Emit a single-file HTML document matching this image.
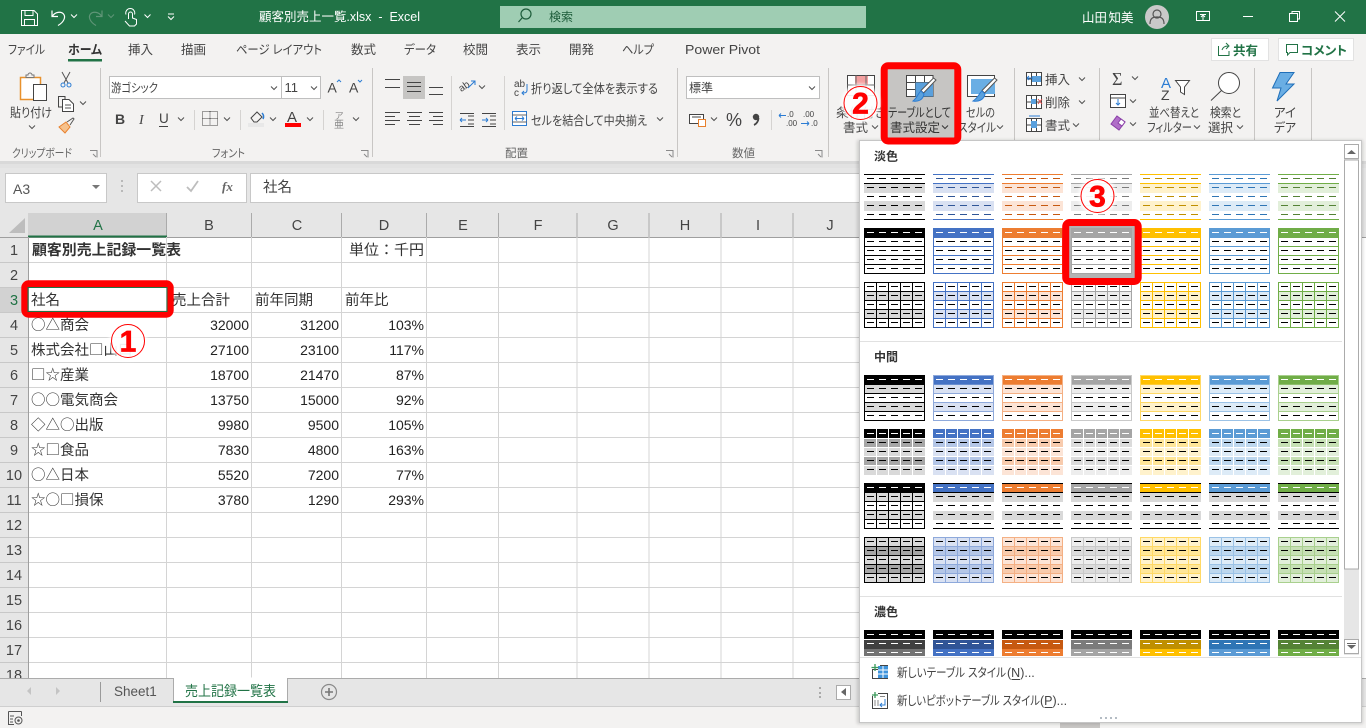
<!DOCTYPE html>
<html lang="ja"><head><meta charset="utf-8"><title>顧客別売上一覧.xlsx - Excel</title>
<style>
html,body{margin:0;padding:0;width:1366px;height:728px;overflow:hidden;background:#e6e6e6}
svg{display:block;position:absolute;left:0;top:0}
text{font-family:"Liberation Sans","Noto Sans CJK JP",sans-serif;font-feature-settings:"palt";white-space:pre;fill:#444;font-size:12.5px}
.w{fill:#fff}
.cell{font-family:"Noto Sans CJK JP","Liberation Sans",sans-serif;font-size:14.5px;fill:#333;font-feature-settings:normal}
.num{font-size:14px;fill:#222;text-anchor:end}
.h{font-size:14.5px;fill:#444;text-anchor:middle}
.b{font-weight:bold}
.g{fill:#217346}
.head{font-size:12px;font-weight:bold;fill:#333}
.dg{fill:#666;font-size:11.5px}
.nd{font-family:"Liberation Sans",sans-serif;font-weight:bold;font-size:30px;fill:#f00;text-anchor:middle;stroke:#f00;stroke-width:.7}
</style></head><body>
<svg width="1366" height="728" viewBox="0 0 1366 728" xmlns="http://www.w3.org/2000/svg">
<defs>
<path id="cv" d="M-3-1.5L0 1.5 3-1.5" fill="none"/>
<g id="a">
<rect y="9" width="61" height="10" style="fill:var(--t)"/><rect y="27" width="61" height="10" style="fill:var(--t)"/>
<path d="M0 .5H61M0 9.5H61M0 45.5H61" style="stroke:var(--m)"/>
<path d="M3 4.5H58M3 13.5H58M3 22.5H58M3 31.5H58M3 40.5H58" stroke-dasharray="7 5" style="stroke:var(--d)"/>
</g>
<g id="b">
<rect x=".5" y=".5" width="60" height="45" fill="#fff" style="stroke:var(--m)"/>
<rect width="61" height="10" style="fill:var(--m)"/>
<path d="M0 18.5H61M0 27.5H61M0 36.5H61" style="stroke:var(--m)"/>
<path d="M3 4.5H58" stroke="#fff" stroke-dasharray="7 5"/>
<path d="M3 13.5H58M3 22.5H58M3 31.5H58M3 40.5H58" stroke="#000" stroke-dasharray="7 5"/>
</g>
<g id="c">
<rect y="9" width="61" height="10" style="fill:var(--t)"/><rect y="27" width="61" height="10" style="fill:var(--t)"/>
<path d="M.5 .5H60.5V45.5H.5ZM0 9.5H61M0 18.5H61M0 27.5H61M0 36.5H61M12.5 0V46M24.5 0V46M36.5 0V46M48.5 0V46" fill="none" style="stroke:var(--m)"/>
<path d="M3 4.5H58M3 13.5H58M3 22.5H58M3 31.5H58M3 40.5H58" stroke="#000" stroke-dasharray="7 5"/>
</g>
<g id="d">
<rect y="9" width="61" height="10" style="fill:var(--t)"/><rect y="27" width="61" height="10" style="fill:var(--t)"/>
<path d="M.5 .5H60.5V45.5H.5ZM0 9.5H61M0 18.5H61M0 27.5H61M0 36.5H61" fill="none" style="stroke:var(--b)"/>
<rect x="1" y="1" width="59" height="8.5" style="fill:var(--m)"/>
<path d="M3 4.5H58" stroke="#fff" stroke-dasharray="7 5"/>
<path d="M3 13.5H58M3 22.5H58M3 31.5H58M3 40.5H58" stroke="#000" stroke-dasharray="7 5"/>
</g>
<g id="e">
<rect width="61" height="46" style="fill:var(--t)"/>
<rect width="61" height="10" style="fill:var(--m)"/>
<rect y="10" width="61" height="9" style="fill:var(--u)"/><rect y="28" width="61" height="9" style="fill:var(--u)"/>
<path d="M0 9.5H61M0 18.5H61M0 27.5H61M0 36.5H61M12.5 0V46M24.5 0V46M36.5 0V46M48.5 0V46" stroke="#fff" fill="none"/>
<path d="M3 4.5H58" stroke="#fff" stroke-dasharray="7 5"/>
<path d="M3 13.5H58M3 22.5H58M3 31.5H58M3 40.5H58" stroke="#000" stroke-dasharray="7 5"/>
</g>
<g id="f">
<rect width="61" height="10" style="fill:var(--m)"/>
<rect y="10" width="61" height="9" fill="#d9d9d9"/><rect y="28" width="61" height="9" fill="#d9d9d9"/>
<path d="M0 .5H61M0 9.5H61M0 45.5H61" stroke="#000"/>
<path d="M3 4.5H58" stroke="#fff" stroke-dasharray="7 5"/>
<path d="M3 13.5H58M3 22.5H58M3 31.5H58M3 40.5H58" stroke="#000" stroke-dasharray="7 5"/>
</g>
<g id="g">
<rect y="9" width="61" height="10" fill="#d9d9d9"/><rect y="27" width="61" height="10" fill="#d9d9d9"/>
<rect width="61" height="10" fill="#000"/>
<path d="M.5 .5H60.5V45.5H.5ZM0 9.5H61M0 18.5H61M0 27.5H61M0 36.5H61M12.5 9V46M24.5 9V46M36.5 9V46M48.5 9V46" fill="none" stroke="#000"/>
<path d="M3 4.5H58" stroke="#fff" stroke-dasharray="7 5"/>
<path d="M3 13.5H58M3 22.5H58M3 31.5H58M3 40.5H58" stroke="#000" stroke-dasharray="7 5"/>
</g>
<g id="h">
<rect width="61" height="46" style="fill:var(--t)"/>
<rect y="9" width="61" height="10" style="fill:var(--u)"/><rect y="27" width="61" height="10" style="fill:var(--u)"/>
<path d="M.5 .5H60.5V45.5H.5ZM0 9.5H61M0 18.5H61M0 27.5H61M0 36.5H61M12.5 0V46M24.5 0V46M36.5 0V46M48.5 0V46" fill="none" style="stroke:var(--b)"/>
<path d="M3 4.5H58M3 13.5H58M3 22.5H58M3 31.5H58M3 40.5H58" stroke="#000" stroke-dasharray="7 5"/>
</g>
<g id="i">
<rect width="61" height="9" fill="#000"/>
<rect y="10" width="61" height="9" style="fill:var(--k)"/>
<rect y="19" width="61" height="7" style="fill:var(--m)"/>
<path d="M3 4.5H58M3 13.5H58M3 22.5H58" stroke="#fff" stroke-dasharray="7 5"/>
</g>
<filter id="bl" x="-20%" y="-20%" width="140%" height="140%"><feGaussianBlur stdDeviation="1.5"/></filter>
</defs>

<!-- background -->
<rect width="1366" height="728" fill="#e6e6e6"/>
<rect y="237" x="28" width="1338" height="441" fill="#fff"/>

<!-- formula bar -->
<g fill="#fff" stroke="#c8c8c8">
<rect x="5.5" y="173.5" width="101" height="29"/>
<rect x="137.5" y="173.5" width="109" height="29"/>
<rect x="250.5" y="173.5" width="1110" height="29"/>
</g>
<text x="13" y="194" style="font-size:14px;fill:#555">A3</text>
<path d="M92 185h8l-4 4z" fill="#777"/>
<path d="M122 180v2M122 185v2M122 190v2" stroke="#aaa" stroke-width="1.5"/>
<path d="M151 181l10 10M161 181l-10 10" stroke="#bdbdbd" stroke-width="1.5"/>
<path d="M187 187l4 4 7-10" stroke="#bdbdbd" stroke-width="1.8" fill="none"/>
<text x="222" y="191" style="font-family:'Liberation Serif',serif;font-style:italic;font-weight:bold;font-size:13px;fill:#666">fx</text>
<text x="263" y="192" style="font-size:14.5px;font-feature-settings:normal">社名</text>

<!-- column headers -->
<rect x="28" y="213" width="139" height="24" fill="#d2d2d2"/>
<path d="M25 218V233H9Z" fill="#bdbdbd"/>
<path d="M166.5 213V237M251.5 213V237M341.5 213V237M426.5 213V237M498.5 213V237M577 213V237M649 213V237M721 213V237M793 213V237" stroke="#ababab"/>
<path d="M0 237.5H1366" stroke="#9f9f9f"/>
<rect x="28" y="235.5" width="139" height="2" fill="#217346"/>
<text class="h g" x="98" y="230" style="fill:#217346">A</text>
<text class="h" x="209" y="230">B</text><text class="h" x="297" y="230">C</text><text class="h" x="384" y="230">D</text>
<text class="h" x="463" y="230">E</text><text class="h" x="538" y="230">F</text><text class="h" x="613" y="230">G</text><text class="h" x="685" y="230">H</text><text class="h" x="758" y="230">I</text><text class="h" x="830" y="230">J</text>

<!-- grid -->
<path d="M28 262.5H866M28 287.5H866M28 312.5H866M28 337.5H866M28 362.5H866M28 387.5H866M28 412.5H866M28 437.5H866M28 462.5H866M28 487.5H866M28 512.5H866M28 537.5H866M28 562.5H866M28 587.5H866M28 612.5H866M28 637.5H866M28 662.5H866M166.5 237V678M251.5 237V678M341.5 237V678M426.5 237V678M498.5 237V678M577 237V678M649 237V678M721 237V678M793 237V678" stroke="#d4d4d4"/>

<!-- row headers -->
<rect y="238" width="28" height="440" fill="#e6e6e6"/>
<rect y="288" width="28" height="24.5" fill="#d2d2d2"/>
<path d="M0 262.5H28M0 287.5H28M0 312.5H28M0 337.5H28M0 362.5H28M0 387.5H28M0 412.5H28M0 437.5H28M0 462.5H28M0 487.5H28M0 512.5H28M0 537.5H28M0 562.5H28M0 587.5H28M0 612.5H28M0 637.5H28M0 662.5H28" stroke="#c8c8c8"/>
<path d="M28.5 237V678" stroke="#9f9f9f"/>
<g>
<text class="h" x="14" y="255">1</text><text class="h" x="14" y="280">2</text><text class="h" x="14" y="305" style="fill:#217346">3</text><text class="h" x="14" y="330">4</text><text class="h" x="14" y="355">5</text><text class="h" x="14" y="380">6</text><text class="h" x="14" y="405">7</text><text class="h" x="14" y="430">8</text><text class="h" x="14" y="455">9</text><text class="h" x="14" y="480">10</text><text class="h" x="14" y="505">11</text><text class="h" x="14" y="530">12</text><text class="h" x="14" y="555">13</text><text class="h" x="14" y="580">14</text><text class="h" x="14" y="605">15</text><text class="h" x="14" y="630">16</text><text class="h" x="14" y="655">17</text><text class="h" x="14" y="680">18</text>
</g>

<!-- cells -->
<text class="cell b" x="32" y="255" textLength="149" lengthAdjust="spacingAndGlyphs">顧客別売上記録一覧表</text>
<text class="cell" x="349" y="255" textLength="75" lengthAdjust="spacingAndGlyphs">単位：千円</text>
<text class="cell" x="31" y="305">社名</text><text class="cell" x="172" y="305">売上合計</text><text class="cell" x="255" y="305">前年同期</text><text class="cell" x="345" y="305">前年比</text>
<text class="cell" x="31" y="330">○△商会</text><text class="cell" x="31" y="355">株式会社□山口</text><text class="cell" x="31" y="380">□☆産業</text><text class="cell" x="31" y="405">○○電気商会</text><text class="cell" x="31" y="430">◇△○出版</text><text class="cell" x="31" y="455">☆□食品</text><text class="cell" x="31" y="480">○△日本</text><text class="cell" x="31" y="505">☆○□損保</text>
<text class="num" x="249" y="330">32000</text><text class="num" x="339" y="330">31200</text><text class="num" x="424" y="330">103%</text>
<text class="num" x="249" y="355">27100</text><text class="num" x="339" y="355">23100</text><text class="num" x="424" y="355">117%</text>
<text class="num" x="249" y="380">18700</text><text class="num" x="339" y="380">21470</text><text class="num" x="424" y="380">87%</text>
<text class="num" x="249" y="405">13750</text><text class="num" x="339" y="405">15000</text><text class="num" x="424" y="405">92%</text>
<text class="num" x="249" y="430">9980</text><text class="num" x="339" y="430">9500</text><text class="num" x="424" y="430">105%</text>
<text class="num" x="249" y="455">7830</text><text class="num" x="339" y="455">4800</text><text class="num" x="424" y="455">163%</text>
<text class="num" x="249" y="480">5520</text><text class="num" x="339" y="480">7200</text><text class="num" x="424" y="480">77%</text>
<text class="num" x="249" y="505">3780</text><text class="num" x="339" y="505">1290</text><text class="num" x="424" y="505">293%</text>

<!-- tab bar and status -->
<rect y="678" width="1366" height="29" fill="#e6e6e6"/>
<path d="M0 678.5H1366" stroke="#ababab"/>
<rect x="173.5" y="677.5" width="114" height="25" fill="#fff"/>
<path d="M173.5 678V702M287.5 678V702" stroke="#ababab"/>
<rect x="173" y="701" width="115" height="2" fill="#217346"/>
<path d="M100.5 682V702" stroke="#9a9a9a"/>
<path d="M31 687v8l-4-4zM56 687v8l4-4z" fill="#c4c4c4"/>
<text x="114" y="696" style="font-size:13.5px;fill:#555">Sheet1</text>
<text x="185" y="696" style="font-size:14px;fill:#217346;font-feature-settings:normal" textLength="91" lengthAdjust="spacingAndGlyphs">売上記録一覧表</text>
<circle cx="329" cy="692" r="7.5" fill="none" stroke="#8a8a8a" stroke-width="1.2"/>
<path d="M329 688v8M325 692h8" stroke="#777" stroke-width="1.6"/>
<path d="M820 687v2M820 692v2M820 696v2" stroke="#aaa" stroke-width="2"/>
<rect x="836.5" y="685.5" width="14" height="14" fill="#fff" stroke="#ababab"/>
<path d="M846 688v8l-5-4z" fill="#666"/>
<rect y="706" width="1366" height="22" fill="#f3f2f1"/>
<path d="M0 706.5H1366" stroke="#cfcfcf"/>
<path d="M8.5 711.5H21.5M8.5 711.5V724.5H14M21.5 711.5V716M10 716h4M10 719h3M10 722h3" stroke="#555" fill="none"/>
<circle cx="18.5" cy="720.5" r="3.5" fill="none" stroke="#555"/><circle cx="18.5" cy="720.5" r="1.3" fill="#555"/>
<rect x="1060" y="722" width="40" height="6" fill="#c8c6c4"/>

<!-- title bar -->
<rect width="1366" height="34" fill="#217346"/>
<rect x="500" y="6" width="366" height="22" fill="#9fcdb3"/>
<g fill="none" stroke="#fff">
<path d="M21.5 10.5H34L37.5 14V25.5H21.5ZM25 10.5V15.5H33V10.5M24.5 25.5V19.5H34.5V25.5"/>
<path d="M52 10.5V16.5H58M52.5 16C55 12 61 11 63.5 14C66 17 64 22 58 25.5" stroke-width="1.2"/>
<path d="M128.5 19V14a2 2 0 0 1 4 0V18l4 1.5V24L134.5 26H129.5L125 21M126 14.5a4.5 4.5 0 1 1 8.5 0"/>
<use href="#cv" x="74" y="16"/><use href="#cv" x="147.5" y="16"/>
<path d="M168 14h6"/><use href="#cv" x="171" y="18"/>
<rect x="1196.5" y="11.5" width="13" height="9"/><path d="M1200 14.5h6M1203 20v-4M1201 17l2-2 2 2"/>
<path d="M1243 16.5h10"/>
<rect x="1289.5" y="13.5" width="8" height="8"/><path d="M1292 13V11.5H1299.5V19H1298"/>
<path d="M1335 11.5l10 10M1345 11.5l-10 10"/>
</g>
<g fill="none" stroke="#5f9577"><path d="M102 10.5V16.5H96M101.5 16C99 12 93 11 90.5 14C88 17 90 22 96 25.5" stroke-width="1.2"/><use href="#cv" x="111" y="16"/></g>
<text class="w" x="259" y="21" style="font-size:12.5px;font-feature-settings:normal" textLength="161" lengthAdjust="spacingAndGlyphs">顧客別売上一覧.xlsx  -  Excel</text>
<circle cx="526" cy="14" r="5" fill="none" stroke="#1d5c3a" stroke-width="1.2"/><path d="M522 18l-3.500 4" stroke="#1d5c3a" stroke-width="1.2"/>
<text x="549" y="21" style="font-size:12px;fill:#1d5c3a">検索</text>
<text class="w" x="1082" y="22" style="font-size:12.5px">山田</text><text class="w" x="1108.500" y="22" style="font-size:12.5px">知美</text>
<circle cx="1157" cy="17" r="12" fill="#c9c9c9"/>
<circle cx="1157" cy="14" r="4" fill="none" stroke="#555" stroke-width="1.2"/><path d="M1150 24c0-6 3-7 7-7s7 1 7 7" fill="none" stroke="#555" stroke-width="1.2"/>

<!-- ribbon -->
<rect y="34" width="1366" height="127" fill="#f3f2f1"/>
<rect y="161" width="1366" height="3" fill="#d9d9d9"/>
<rect y="164" width="1366" height="4" fill="#e2e2e2"/>
<text x="8" y="54" textLength="37" lengthAdjust="spacingAndGlyphs">ファイル</text>
<text x="68" y="54" class="b" textLength="34" lengthAdjust="spacingAndGlyphs" style="fill:#333">ホーム</text>
<rect x="68" y="59" width="34" height="2.5" fill="#217346"/>
<text x="128" y="54">挿入</text><text x="181" y="54">描画</text><text x="236" y="54" textLength="86" lengthAdjust="spacingAndGlyphs">ページ レイアウト</text><text x="351" y="54">数式</text><text x="404" y="54" textLength="32" lengthAdjust="spacingAndGlyphs">データ</text><text x="463" y="54">校閲</text><text x="516" y="54">表示</text><text x="569" y="54">開発</text><text x="622" y="54" textLength="32" lengthAdjust="spacingAndGlyphs">ヘルプ</text><text x="685" y="54" textLength="75" lengthAdjust="spacingAndGlyphs" style="font-size:13px">Power Pivot</text>

<!-- share -->
<rect x="1211.5" y="38.5" width="57" height="22" fill="#fff" stroke="#e2e2e2"/>
<rect x="1278.5" y="38.5" width="75" height="22" fill="#fff" stroke="#e2e2e2"/>
<path d="M1218.5 46V55.5H1229V51M1222 50c1-3 3-4 6-4M1226 43l3 3-3 3" fill="none" stroke="#217346"/>
<text x="1233" y="55" class="b g" style="font-size:12.5px;fill:#217346">共有</text>
<path d="M1286.5 44.5H1297.5V52.5H1290L1287.5 55V52.5H1286.5Z" fill="none" stroke="#217346"/>
<text x="1301" y="55" class="b" style="font-size:12.5px;fill:#217346" textLength="46" lengthAdjust="spacingAndGlyphs">コメント</text>

<!-- separators -->
<path d="M100.5 68V157M372.5 68V157M677.5 68V157M828.5 68V157M1014.5 68V140M1099.5 68V140M1254.5 68V140M1311.5 68V140" stroke="#c8c6c4"/>
<path d="M194.5 110V130M240.5 110V130M323.5 110V130M451.5 76V130M504.5 76V130M771.5 110V130" stroke="#d5d3d1"/>

<!-- clipboard group -->
<rect x="20.5" y="77.5" width="20" height="22" fill="#fff" stroke="#e8912d" stroke-width="1.5"/>
<path d="M26 77v-2h2a2 2 0 0 1 4 0h2v2.500H26z" fill="#f3f2f1" stroke="#777"/>
<rect x="33.5" y="84.5" width="13" height="16" fill="#fff" stroke="#444"/>
<text x="10" y="117" textLength="42" lengthAdjust="spacingAndGlyphs">貼り付け</text>
<g stroke="#505050"><use href="#cv" x="32" y="127"/><use href="#cv" x="83" y="103"/>
<use href="#cv" x="181" y="119"/><use href="#cv" x="227" y="119"/><use href="#cv" x="273" y="119"/><use href="#cv" x="310" y="119"/><use href="#cv" x="356" y="119"/><use href="#cv" x="482" y="87"/><use href="#cv" x="660" y="119"/><use href="#cv" x="714" y="119"/><use href="#cv" x="875" y="127"/><use href="#cv" x="1000" y="127"/><use href="#cv" x="1082" y="79"/><use href="#cv" x="1082" y="102"/><use href="#cv" x="1076" y="125"/><use href="#cv" x="1135" y="78"/><use href="#cv" x="1133" y="101"/><use href="#cv" x="1133" y="124"/><use href="#cv" x="1197" y="127"/><use href="#cv" x="1240" y="127"/></g>
<path d="M62 72l6 11M70 72l-6 11" stroke="#555" fill="none"/><circle cx="63" cy="85" r="2" fill="none" stroke="#2b7cd3"/><circle cx="69" cy="85" r="2" fill="none" stroke="#2b7cd3"/>
<path d="M58.5 96.5H65V107H58.5Z" fill="none" stroke="#444"/>
<path d="M62.5 99.5H69L73.5 104V111.5H62.5Z" fill="#fff" stroke="#444"/><path d="M65 105h6M65 108h6" stroke="#555"/>
<path d="M59 127l7-5 4 5-5 6z" fill="#f6c18c" stroke="#e8802d"/><path d="M67 122l6-4 1 1-4 6" fill="none" stroke="#555"/>
<text x="12" y="157" class="dg" textLength="60" lengthAdjust="spacingAndGlyphs">クリップボード</text>
<path d="M90 150.5h7v7M93 154l3 3" fill="none" stroke="#8a8a8a"/>

<!-- font group -->
<rect x="109.5" y="76.5" width="172" height="22" fill="#fff" stroke="#bfbfbf"/>
<rect x="281.5" y="76.5" width="39" height="22" fill="#fff" stroke="#bfbfbf"/>
<text x="111" y="92" style="font-size:12px" textLength="47" lengthAdjust="spacingAndGlyphs">游ゴシック</text>
<g stroke="#505050"><use href="#cv" x="274" y="88"/><use href="#cv" x="314" y="88"/></g>
<text x="284.5" y="92" style="font-size:13px">11</text>
<text x="327.5" y="92.5" style="font-size:14px">A</text><path d="M337 82l2-2 2 2" stroke="#2b7cd3" fill="none"/>
<text x="349" y="92.5" style="font-size:14px">A</text><path d="M358 80l2 2 2-2" stroke="#2b7cd3" fill="none"/>
<text x="115" y="124" class="b" style="font-size:14px">B</text>
<text x="139" y="124" style="font-size:14px;font-family:'Liberation Serif',serif;font-style:italic">I</text>
<text x="159" y="123" style="font-size:13.5px">U</text><path d="M159 126.5h9" stroke="#444"/>
<path d="M202.5 111.5h15v14h-15zM210 111.500v14M202.500 118.500h15" fill="none" stroke="#444" stroke-dasharray="1 1"/>
<path d="M251 118l6-6 5 5-5 5h-3z" fill="none" stroke="#444"/><path d="M262 113c2 2 2 4 1 6" fill="none" stroke="#2b7cd3" stroke-width="1.5"/>
<rect x="248" y="123" width="16" height="4" fill="#e8e8e8"/>
<text x="287" y="122" style="font-size:15px">A</text>
<rect x="285" y="123" width="16" height="4" fill="#f00"/>
<text x="335" y="119" style="font-size:9px;fill:#888">ア</text><text x="334" y="128" style="font-size:10px;fill:#888">亜</text>
<text x="212" y="157" class="dg" textLength="33" lengthAdjust="spacingAndGlyphs">フォント</text>
<path d="M361 150.5h7v7M364 154l3 3" fill="none" stroke="#8a8a8a"/>

<!-- align group -->
<rect x="403" y="76" width="22" height="23" fill="#c6c5c3"/>
<path d="M385 79.5h15M385 87.5h15M407 82.5h14M407 86.5h14M407 91.5h14M429 87.5h14M429 94.5h14" stroke="#444"/>
<path d="M385 112.5h15M385 116.5h10M385 120.5h15M385 124.5h10M407 112.5h15M409 116.5h11M407 120.5h15M409 124.5h11M429 112.5h14M433 116.5h10M429 120.5h14M433 124.5h10" stroke="#444"/>
<text x="459" y="91" style="font-size:10px" transform="rotate(-35 462 88)">ab</text><path d="M468 88l7-7M471 81h4v4" stroke="#2b7cd3" fill="none"/>
<path d="M460 120h6M460 120l2-2M460 120l2 2" stroke="#2b7cd3" fill="none"/><path d="M468 116h6M468 120h6M468 124h6M460 113.5h14M460 126.5h14" stroke="#444"/>
<path d="M488 120h-6M488 120l-2-2M488 120l-2 2" stroke="#2b7cd3" fill="none"/><path d="M490 116h6M490 120h6M490 124h6M482 113.5h14M482 126.5h14" stroke="#444"/>
<text x="514" y="87" style="font-size:10px">ab</text><text x="514" y="96" style="font-size:10px">c</text><path d="M527 84v6c0 3-2 3-5 3M524 91l-2 2 2 2" stroke="#2b7cd3" fill="none"/>
<text x="531" y="93" textLength="127" lengthAdjust="spacingAndGlyphs">折り返して全体を表示する</text>
<rect x="512.5" y="111.5" width="14" height="14" fill="#fff" stroke="#2b7cd3"/><path d="M512 115h15M512 122h15" stroke="#666"/><path d="M515 118.5h9M515 118.5l2-2M515 118.5l2 2M524 118.5l-2-2M524 118.5l-2 2" stroke="#2b7cd3" fill="none"/>
<text x="531" y="125" textLength="116" lengthAdjust="spacingAndGlyphs">セルを結合して中央揃え</text>
<text x="505" y="157" class="dg">配置</text>
<path d="M666 150.5h7v7M669 154l3 3" fill="none" stroke="#8a8a8a"/>

<!-- number group -->
<rect x="686.5" y="76.5" width="133" height="22" fill="#fff" stroke="#bfbfbf"/>
<g stroke="#505050"><use href="#cv" x="812" y="88"/></g>
<text x="689" y="92" style="font-size:12px">標準</text>
<rect x="689.5" y="114.5" width="14" height="9" fill="#fff" stroke="#444"/><rect x="698.5" y="119.5" width="7" height="7" fill="#fff" stroke="#e8802d"/><path d="M692 117h9" stroke="#444"/>
<text x="726" y="126" style="font-size:18px">%</text>
<circle cx="756" cy="117" r="3.2" fill="#444"/><path d="M758.500 118c0 3-2 6-4.500 7" fill="none" stroke="#444" stroke-width="1.8"/>
<text x="787" y="117" style="font-size:8px">.0</text><text x="786" y="126" style="font-size:8px">.00</text><path d="M779 115.5h7M779 115.5l2-2M779 115.5l2 2" stroke="#2b7cd3" fill="none"/>
<text x="803" y="117" style="font-size:8px">.00</text><text x="811" y="126" style="font-size:8px">.0</text><path d="M801 123.5h8M809 123.5l-2-2M809 123.5l-2 2" stroke="#2b7cd3" fill="none"/>
<text x="732" y="157" class="dg">数値</text>
<path d="M815 150.5h7v7M818 154l3 3" fill="none" stroke="#8a8a8a"/>

<!-- styles group -->
<rect x="847.5" y="75.5" width="27" height="20" fill="#fff" stroke="#444"/><rect x="855" y="76" width="13" height="9" fill="#f4a0a0"/><path d="M847 85h28M856 75v20M866 75v20" stroke="#666"/>
<text x="836" y="117" textLength="50" lengthAdjust="spacingAndGlyphs">条件付き</text>
<text x="843" y="132">書式</text>
<rect x="884" y="65.5" width="74" height="75.5" fill="#c6c5c3"/>
<path d="M906.5 75.5H933V96.5H906.5ZM906.5 82.5H933M906.5 89.5H933M915.5 75.5V96.500M924.500 75.500V96.500" fill="#fff" stroke="#444"/>
<rect x="915.5" y="82.5" width="17.5" height="14" fill="#5aa0dc"/>
<path d="M936 80L923.500 93 921 90.500 933.500 78Z" fill="#fff" stroke="#555"/><path d="M921 91c-3 2-3 6-8 10 5 1 10-1 11-7z" fill="#5aa0dc" stroke="#2b7cd3"/>
<text x="888" y="117" textLength="63" lengthAdjust="spacingAndGlyphs" style="fill:#333">テーブルとして</text>
<text x="890" y="132" textLength="50" lengthAdjust="spacingAndGlyphs" style="fill:#333">書式設定</text>
<g stroke="#333"><use href="#cv" x="945" y="127"/></g>
<rect x="967.5" y="75.5" width="27" height="21" fill="#fff" stroke="#444"/><rect x="971" y="79" width="24" height="15" fill="#6aaee4"/><path d="M997 80L984.500 93 982 90.500 994.500 78Z" fill="#fff" stroke="#555"/><path d="M982 91c-3 2-3 6-9 10 5 1 11-1 12-7z" fill="#5aa0dc" stroke="#2b7cd3"/>
<text x="966" y="117" textLength="29" lengthAdjust="spacingAndGlyphs">セルの</text>
<text x="958" y="132" textLength="38" lengthAdjust="spacingAndGlyphs">スタイル</text>

<!-- cells group -->
<path d="M1026.5 72.5H1041.5V85.5H1026.5ZM1026.5 79H1041.5M1031.5 72.5V85.5M1036.5 72.5V85.5" fill="#fff" stroke="#444"/><rect x="1032" y="76" width="9" height="6" fill="#5aa0dc"/><path d="M1027 78h6M1027 78l2-2M1027 78l2 2" stroke="#2b7cd3" fill="none"/>
<text x="1045" y="84">挿入</text>
<path d="M1026.5 95.5H1041.5V108.5H1026.5ZM1026.5 102H1041.5M1031.5 95.5V108.5M1036.5 95.5V108.5" fill="#fff" stroke="#444"/><rect x="1031" y="99" width="5" height="5" fill="#5aa0dc"/><path d="M1038 99l4 5M1042 99l-4 5" stroke="#e04a4a"/>
<text x="1045" y="107">削除</text>
<path d="M1026.5 118.5H1041.5V131.5H1026.5ZM1026.5 125H1041.5M1031.5 118.5V131.5M1036.5 118.5V131.5" fill="#fff" stroke="#444"/><rect x="1031" y="121" width="6" height="7" fill="#5aa0dc"/><path d="M1029 116h11" stroke="#2b7cd3"/>
<text x="1045" y="130">書式</text>

<!-- editing group -->
<text x="1112" y="85" style="font-size:18px;font-family:'Liberation Serif',serif">Σ</text>
<rect x="1110.5" y="94.5" width="15" height="13" fill="#fff" stroke="#444"/><path d="M1110 98h16" stroke="#444"/><path d="M1118 99v6M1116 103l2 2 2-2" stroke="#2b7cd3" fill="none"/>
<path d="M1117 116l8 6-6 8-8-6z" fill="#b06ec8" stroke="#8a3fa8"/><path d="M1121 119l4 3-3 4-4-3z" fill="#fff" stroke="#8a3fa8"/>
<text x="1161" y="88" style="font-size:15px;fill:#2b7cd3">A</text><text x="1161" y="100" style="font-size:14px">Z</text>
<path d="M1175.5 80.5H1189.5L1184.5 87V94.5L1180.5 92V87Z" fill="#fff" stroke="#444"/>
<circle cx="1229" cy="83" r="10.5" fill="#fff" stroke="#444"/><path d="M1221.5 90.5L1211 100.5" stroke="#444"/>
<text x="1149" y="117" textLength="50" lengthAdjust="spacingAndGlyphs">並べ替えと</text>
<text x="1147" y="132" textLength="45" lengthAdjust="spacingAndGlyphs">フィルター</text>
<text x="1210" y="117" textLength="31" lengthAdjust="spacingAndGlyphs">検索と</text>
<text x="1208" y="132">選択</text>
<path d="M1280 72.5H1294L1286 84H1294L1277 101L1281 88H1272.5Z" fill="#6aaee4" stroke="#1f6fb9"/>
<text x="1274" y="117" textLength="22" lengthAdjust="spacingAndGlyphs">アイ</text><text x="1274" y="132" textLength="22" lengthAdjust="spacingAndGlyphs">デア</text>

<!-- panel -->
<rect x="857" y="140" width="506" height="584" fill="#000" opacity=".15" filter="url(#bl)"/>
<rect x="859.5" y="140.5" width="502" height="582" fill="#fff" stroke="#c6c6c6"/>
<rect x="1344" y="144" width="15" height="511" fill="#e6e6e6"/>
<rect x="1344.5" y="144.5" width="14" height="14" fill="#fff" stroke="#ababab"/><path d="M1347 154l4.500-4 4.500 4z" fill="#666"/>
<rect x="1344.5" y="160" width="14" height="409" fill="#fff" stroke="#ababab"/>
<rect x="1344.5" y="639.5" width="14" height="14" fill="#fff" stroke="#ababab"/><path d="M1347 645h9l-4.500 4z" fill="#666"/><path d="M1347 643.5h9" stroke="#666"/>
<text x="874" y="160.5" class="head">淡色</text>
<text x="874" y="361" class="head">中間</text>
<text x="874" y="616" class="head">濃色</text>
<path d="M860 341.5H1342M860 596.5H1342" stroke="#e1e1e1"/>

<!-- highlight behind swatch -->
<rect x="1066" y="223" width="72" height="58" fill="#b3b3b3"/>

<g style="--m:#000;--t:#d9d9d9;--u:#a6a6a6;--b:#000;--d:#000;--k:#404040">
<use href="#a" x="864" y="174"/><use href="#b" x="864" y="228"/><use href="#c" x="864" y="282"/><use href="#d" x="864" y="375"/><use href="#e" x="864" y="429"/><use href="#g" x="864" y="483"/><use href="#h" x="864" y="537"/>
</g>
<g style="--m:#737373;--k:#404040"><use href="#i" x="864" y="630"/></g>
<g style="--m:#4472c4;--t:#d9e1f2;--u:#b4c6e7;--b:#8ea9db;--d:#2f5597;--k:#305496">
<use href="#a" x="933" y="174"/><use href="#b" x="933" y="228"/><use href="#c" x="933" y="282"/><use href="#d" x="933" y="375"/><use href="#e" x="933" y="429"/><use href="#f" x="933" y="483"/><use href="#h" x="933" y="537"/><use href="#i" x="933" y="630"/>
</g>
<g style="--m:#ed7d31;--t:#fce4d6;--u:#f8cbad;--b:#f4b084;--d:#c65911;--k:#c65911">
<use href="#a" x="1002" y="174"/><use href="#b" x="1002" y="228"/><use href="#c" x="1002" y="282"/><use href="#d" x="1002" y="375"/><use href="#e" x="1002" y="429"/><use href="#f" x="1002" y="483"/><use href="#h" x="1002" y="537"/><use href="#i" x="1002" y="630"/>
</g>
<g style="--m:#a5a5a5;--t:#ededed;--u:#dbdbdb;--b:#c9c9c9;--d:#7b7b7b;--k:#7b7b7b">
<use href="#a" x="1071" y="174"/><use href="#b" x="1071" y="228"/><use href="#c" x="1071" y="282"/><use href="#d" x="1071" y="375"/><use href="#e" x="1071" y="429"/><use href="#f" x="1071" y="483"/><use href="#h" x="1071" y="537"/><use href="#i" x="1071" y="630"/>
</g>
<g style="--m:#ffc000;--t:#fff2cc;--u:#ffe699;--b:#ffd966;--d:#bf8f00;--k:#bf8f00">
<use href="#a" x="1140" y="174"/><use href="#b" x="1140" y="228"/><use href="#c" x="1140" y="282"/><use href="#d" x="1140" y="375"/><use href="#e" x="1140" y="429"/><use href="#f" x="1140" y="483"/><use href="#h" x="1140" y="537"/><use href="#i" x="1140" y="630"/>
</g>
<g style="--m:#5b9bd5;--t:#ddebf7;--u:#bdd7ee;--b:#9bc2e6;--d:#2f75b5;--k:#2f75b5">
<use href="#a" x="1209" y="174"/><use href="#b" x="1209" y="228"/><use href="#c" x="1209" y="282"/><use href="#d" x="1209" y="375"/><use href="#e" x="1209" y="429"/><use href="#f" x="1209" y="483"/><use href="#h" x="1209" y="537"/><use href="#i" x="1209" y="630"/>
</g>
<g style="--m:#70ad47;--t:#e2efda;--u:#c6e0b4;--b:#a9d08e;--d:#548235;--k:#548235">
<use href="#a" x="1278" y="174"/><use href="#b" x="1278" y="228"/><use href="#c" x="1278" y="282"/><use href="#d" x="1278" y="375"/><use href="#e" x="1278" y="429"/><use href="#f" x="1278" y="483"/><use href="#h" x="1278" y="537"/><use href="#i" x="1278" y="630"/>
</g>

<!-- panel footer -->
<rect x="860" y="656" width="501" height="66" fill="#fff"/>
<path d="M860 657.5H1361" stroke="#e1e1e1"/>
<path d="M872.5 669.5H887.5V678.5H872.5ZM880 665.5H887.5V678.5M884 665.5V678.5M880 672H888" fill="none" stroke="#444"/><rect x="878" y="666" width="10" height="12" fill="#3f94dc"/><path d="M878 670h10M878 674h10M883 666v12" stroke="#fff"/><path d="M875 664v7M871.5 667.5h7" stroke="#3a9a5b" stroke-width="1.3"/>
<text x="897" y="677" textLength="109" lengthAdjust="spacingAndGlyphs">新しいテーブル スタイル</text><text x="1007" y="677">(N)...</text><path d="M1011.500 679.500h8.500" stroke="#444"/>
<path d="M872.5 696V708.5H887.5V693.5H878" fill="none" stroke="#444"/><path d="M880 696.5h5M875 700v6M878 700v6" stroke="#888"/><path d="M885 699v6h-5M882 703l-2 2 2 2" fill="none" stroke="#2b7cd3"/><path d="M875 692v6M872 695h6" stroke="#3a9a5b" stroke-width="1.3"/>
<text x="897" y="705" textLength="143" lengthAdjust="spacingAndGlyphs">新しいピボットテーブル スタイル</text><text x="1040" y="705">(P)...</text><path d="M1044.500 707.500h8" stroke="#444"/>
<path d="M1100 718h2M1105 718h2M1110 718h2M1115 718h2" stroke="#b4bcc4" stroke-width="2"/>

<!-- callouts -->
<rect x="24.7" y="283.7" width="145.6" height="30.6" rx="4" fill="none" stroke="#f00" stroke-width="6.8"/>
<rect x="28" y="287.5" width="139" height="24" fill="none" stroke="#217346"/>
<rect x="884.2" y="65.7" width="73.6" height="75.3" rx="4" fill="none" stroke="#f00" stroke-width="7"/>
<rect x="1065.7" y="222.5" width="72.5" height="59" rx="4" fill="none" stroke="#f00" stroke-width="7"/>

<circle cx="128" cy="341" r="19" fill="#fff" opacity=".92" filter="url(#bl)"/>
<circle cx="128" cy="341" r="16.5" fill="none" stroke="#f00"/>
<text class="nd" x="128" y="351.5">1</text>
<circle cx="860.5" cy="103" r="19" fill="#fff" opacity=".92" filter="url(#bl)"/>
<circle cx="860.5" cy="103" r="16.5" fill="none" stroke="#f00"/>
<text class="nd" x="860.5" y="113.5">2</text>
<circle cx="1097.5" cy="196" r="19" fill="#fff" opacity=".92" filter="url(#bl)"/>
<circle cx="1097.5" cy="196" r="16.5" fill="none" stroke="#f00"/>
<text class="nd" x="1097.5" y="206.5">3</text>
</svg>
</body></html>
